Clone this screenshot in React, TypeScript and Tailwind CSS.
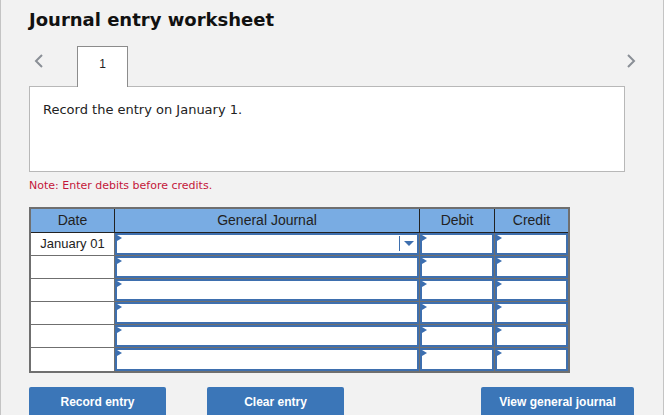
const rows = [0, 1, 2, 3, 4, 5];

function Flag() {
  return (
    <span className="absolute left-0 top-0 h-0 w-0 border-y-[3px] border-l-[5px] border-y-transparent border-l-[#3b6eb0]" />
  );
}

function InputCell({ className, dropdown }: { className: string; dropdown?: boolean }) {
  return (
    <div className={`h-full border-r border-[#6f6f6f] ${className}`}>
      <div className="relative h-full border-2 border-[#3e6fae] bg-white">
        <Flag />
        {dropdown && (
          <div className="absolute right-0 top-[1px] flex h-[15px] w-[18px] items-center justify-center border-l border-[#3e6fae]">
            <span className="h-0 w-0 border-x-[5px] border-t-[5px] border-x-transparent border-t-[#3e6fae]" />
          </div>
        )}
      </div>
    </div>
  );
}

function Chevron({ dir }: { dir: "left" | "right" }) {
  return (
    <svg width="12" height="16" viewBox="0 0 12 16" fill="none">
      <polyline
        points={dir === "left" ? "9,2 3,8 9,14" : "3,2 9,8 3,14"}
        stroke="#8a8f96"
        strokeWidth="2"
      />
    </svg>
  );
}

export default function App() {
  return (
    <div className="h-[415px] w-[667px] overflow-hidden bg-white">
      <div className="h-full w-[664px] border-x border-[#c4c4c4] bg-[#f2f2f2] px-[28px] font-['DejaVu_Sans',sans-serif]">
        <h1 className="pt-[10px] text-[18px] font-bold leading-[20px] text-[#111]">Journal entry worksheet</h1>

        <div className="mt-[16px] flex h-[40px] items-start">
          <div className="mt-[7px] ml-[4px]">
            <Chevron dir="left" />
          </div>
          <div className="relative z-10 ml-[32px] flex h-[41px] w-[51px] justify-center border border-b-0 border-[#8c8c8c] bg-white pt-[8px] font-['Liberation_Sans',sans-serif] text-[12px] text-[#222]">
            1
          </div>
          <div className="ml-auto mr-[-2px] mt-[7px]">
            <Chevron dir="right" />
          </div>
        </div>

        <div className="h-[86px] w-[596px] border border-[#b8b8b8] bg-white px-[13px] pt-[13px] text-[13px] text-[#222]">
          Record the entry on January 1.
        </div>

        <p className="mt-[7px] text-[11px] leading-[14px] text-[#c4163a]">Note: Enter debits before credits.</p>

        <div className="mt-[14px] w-[541px] border-2 border-[#6f6f6f] font-['Liberation_Sans',sans-serif] text-[13px] text-[#222]">
          <div className="flex h-[24px] border-b border-[#222] bg-[#79ace3] text-[14px]">
            <div className="flex w-[84px] items-center justify-center border-r border-[#222]">Date</div>
            <div className="flex w-[305px] items-center justify-center border-r border-[#222]">General Journal</div>
            <div className="flex w-[75px] items-center justify-center border-r border-[#222]">Debit</div>
            <div className="flex flex-1 items-center justify-center">Credit</div>
          </div>
          {rows.map((r) => (
            <div key={r} className={`flex h-[23px] ${r < 5 ? "border-b border-[#6f6f6f]" : ""}`}>
              <div className="flex h-full w-[84px] items-center justify-center border-r border-[#6f6f6f] bg-white">
                {r === 0 ? "January 01" : ""}
              </div>
              <InputCell className="w-[305px]" dropdown={r === 0} />
              <InputCell className="w-[75px]" />
              <div className="h-full flex-1">
                <div className="relative h-full border-2 border-[#3e6fae] bg-white">
                  <Flag />
                </div>
              </div>
            </div>
          ))}
        </div>

        <div className="mt-[14px] flex font-['Liberation_Sans',sans-serif] text-[12px] font-bold text-white">
          <button className="h-[30px] w-[137px] rounded-t-[2px] bg-[#3b76b8]">Record entry</button>
          <button className="ml-[41px] h-[30px] w-[137px] rounded-t-[2px] bg-[#3b76b8]">Clear entry</button>
          <button className="ml-auto mr-[1px] h-[30px] w-[153px] rounded-t-[2px] bg-[#3b76b8]">View general journal</button>
        </div>
      </div>
    </div>
  );
}
